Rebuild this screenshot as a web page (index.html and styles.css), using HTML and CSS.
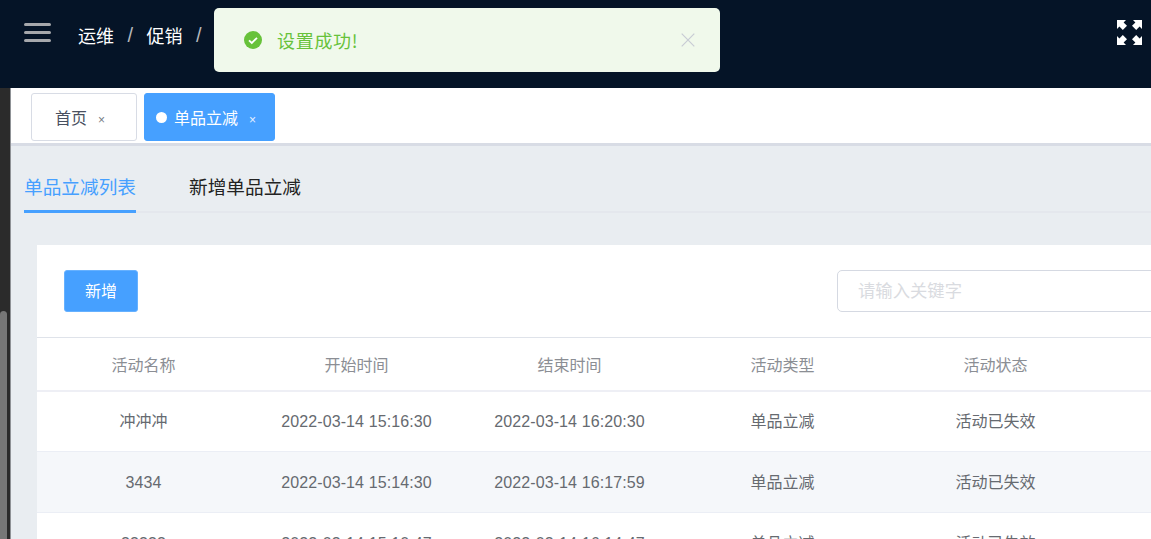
FILE: index.html
```html
<!DOCTYPE html>
<html lang="zh">
<head>
<meta charset="utf-8">
<title>单品立减</title>
<link rel="stylesheet" href="styles.css">
</head>
<body>
<div class="shell">
  <aside class="rail"><div class="rail-thumb"></div></aside>
  <header class="topbar">
    <svg class="menu-icon" viewBox="0 0 27 20" width="27" height="20"><path d="M1.500 2.500h24M1.500 10.500h24M1.500 18.500h24" stroke="#a6a8ac" stroke-width="3" stroke-linecap="round" fill="none"/></svg>
    <nav class="crumbs"><span>运维</span><i>/</i><span>促销</span><i>/</i></nav>
    <svg class="full-icon" viewBox="0 0 25 25" width="25" height="25" fill="#fff"><path d="M0 0h9L6.600 2.400 10 5.800 5.800 10 2.400 6.600 0 9zM25 0v9l-2.400-2.400L19.200 10 15 5.800l3.400-3.400L16 0zM0 25v-9l2.400 2.400L5.800 15l4.200 4.200-3.400 3.400L9 25zM25 25h-9l2.400-2.400L15 19.200l4.200-4.200 3.400 3.400L25 16z"/></svg>
  </header>
  <div class="tagbar">
    <div class="tag"><span>首页</span><b>×</b></div>
    <div class="tag tag-active"><em></em><span>单品立减</span><b>×</b></div>
  </div>
  <main class="content">
    <div class="tabs">
      <div class="tab tab-active">单品立减列表</div>
      <div class="tab">新增单品立减</div>
    </div>
    <section class="card">
      <div class="toolbar">
        <button class="add-btn">新增</button>
        <div class="search">请输入关键字</div>
      </div>
      <div class="row head"><div>活动名称</div><div>开始时间</div><div>结束时间</div><div>活动类型</div><div>活动状态</div></div>
      <div class="row first"><div class="cjk">冲冲冲</div><div class="num">2022-03-14 15:16:30</div><div class="num">2022-03-14 16:20:30</div><div class="cjk">单品立减</div><div class="cjk">活动已失效</div></div>
      <div class="row stripe"><div class="num">3434</div><div class="num">2022-03-14 15:14:30</div><div class="num">2022-03-14 16:17:59</div><div class="cjk">单品立减</div><div class="cjk">活动已失效</div></div>
      <div class="row"><div class="num">33333</div><div class="num">2022-03-14 15:10:47</div><div class="num">2022-03-14 16:14:47</div><div class="cjk">单品立减</div><div class="cjk">活动已失效</div></div>
    </section>
  </main>
  <div class="toast">
    <svg class="toast-check" viewBox="0 0 18 18" width="18" height="18"><circle cx="9" cy="9" r="9" fill="#67c23a"/><path d="M5 9.300l2.800 2.700L13 6.800" stroke="#fff" stroke-width="1.800" fill="none"/></svg>
    <span class="toast-text">设置成功!</span>
    <svg class="toast-close" viewBox="0 0 14 14" width="14" height="14"><path d="M.7.7l12.600 12.600M13.300.7L.7 13.300" stroke="#c8ccd4" stroke-width="1.200" fill="none"/></svg>
  </div>
</div>
</body>
</html>
```
FILE: styles.css
```css
* { box-sizing: border-box; }
html, body { margin: 0; height: 100%; overflow: hidden; }
body { font-family: "Noto Sans CJK SC", "Liberation Sans", sans-serif; background: #fff; }
.shell { position: relative; width: 1151px; height: 539px; overflow: hidden; display: grid; grid-template-columns: 11px 1fr; grid-template-rows: 88px 58px 1fr; }
.topbar { grid-column: 1 / 3; grid-row: 1; background: #051427; display: flex; align-items: flex-start; padding: 22px 9px 0 24px; }
.menu-icon { flex: none; }
.crumbs { margin-left: 27px; color: #fff; font-size: 18px; line-height: 26px; display: flex; gap: 13.500px; }
.crumbs i { font-style: normal; color: #b4b7bc; font-family: "Liberation Sans", sans-serif; font-size: 20px; }
.full-icon { margin-left: auto; margin-top: -2px; }
.rail { grid-column: 1; grid-row: 2 / 4; background: #2b2b2b; border-right: 1px solid #8f9296; position: relative; }
.rail-thumb { position: absolute; left: 0; top: 223px; width: 7px; bottom: 0; background: #777; border-radius: 4px 4px 0 0; }
.tagbar { grid-column: 2; grid-row: 2; background: #fff; display: flex; gap: 7px; padding: 5px 0 0 20px; border-bottom: 3px solid #d8dce5; }
.tag { width: 106px; height: 48px; border: 1px solid #d8dce5; border-radius: 3px; display: flex; align-items: center; padding-left: 23px; font-size: 16px; color: #495060; }
.tag b { font-family: "Liberation Sans", sans-serif; font-weight: 400; font-size: 12px; margin: 5px 0 0 11px; color: #777c85; }
.tag-active { width: 131px; padding-left: 11px; background: #46a0ff; border-color: #46a0ff; color: #fff; }
.tag-active b { color: #e6f1ff; }
.tag-active em { width: 11px; height: 11px; border-radius: 50%; background: #fff; margin-right: 7px; }
.content { grid-column: 2; grid-row: 3; background: #e9edf1; padding: 21px 0 0 13px; min-width: 0; overflow: hidden; }
.tabs { display: flex; gap: 53px; border-bottom: 2px solid #e4e7ed; height: 46px; }
.tab { font-size: 18.670px; line-height: 38px; height: 46px; color: #222; }
.tab-active { color: #46a0ff; border-bottom: 3px solid #46a0ff; width: 112px; }
.card { margin: 32px 0 0 13px; background: #fff; width: 1120px; }
.toolbar { height: 92px; display: flex; justify-content: space-between; align-items: flex-start; padding: 25px 0 0 27px; }
.add-btn { width: 74px; height: 42px; border: 1px solid #66b1ff; background: #46a0ff; border-radius: 3px; color: #fff; font: 16px "Noto Sans CJK SC", "Liberation Sans", sans-serif; padding: 0 0 2px; }
.search { width: 320px; height: 42px; flex: none; border: 1px solid #d5d9e2; border-radius: 5px; padding-left: 20px; line-height: 38px; font-size: 17.330px; color: #d9dbe0; margin-left: auto; }
.row { display: grid; grid-template-columns: repeat(5, 213px); height: 61px; align-items: center; text-align: center; font-size: 16px; color: #666a70; border-bottom: 1px solid #ebeef5; }
.row.head { height: 55px; border-top: 1px solid #dfe3ea; border-bottom: 2px solid #eeeff5; color: #8b8e94; }
.row.first { height: 60px; }
.cjk { padding-bottom: 3px; }
.num { font-family: "Liberation Sans", sans-serif; letter-spacing: .1px; padding-top: 1px; }
.stripe { background: #f5f7fa; }
.toast { position: absolute; left: 214px; top: 8px; width: 506px; height: 64px; background: #f0f9eb; border-radius: 5px; display: flex; align-items: center; padding: 0 25px 0 30px; }
.toast-text { color: #67c23a; font-size: 18px; margin-left: 15px; letter-spacing: .7px; }
.toast-close { margin-left: auto; }
```
